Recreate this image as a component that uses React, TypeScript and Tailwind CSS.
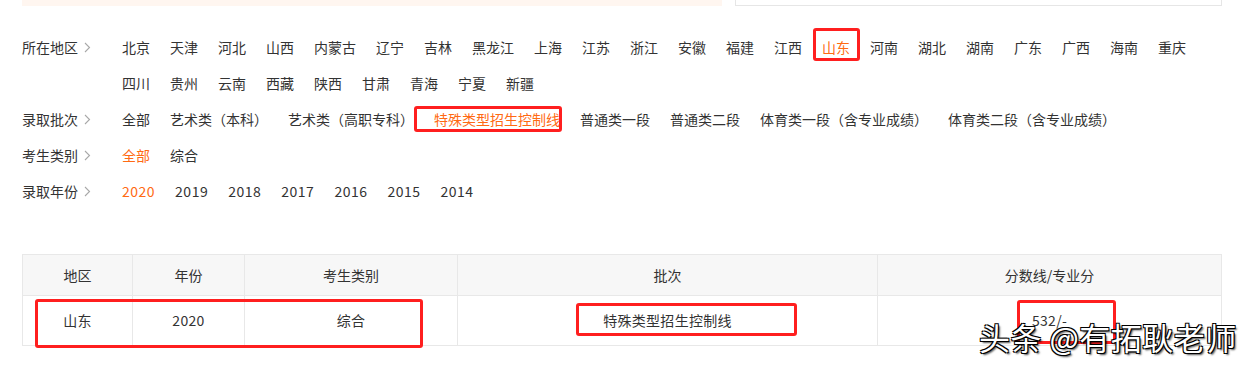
import React from "react";

const regionsRow = [
  "北京","天津","河北","山西","内蒙古","辽宁","吉林","黑龙江","上海","江苏","浙江","安徽","福建","江西","山东","河南","湖北","湖南","广东","广西","海南","重庆",
  "四川","贵州","云南","西藏","陕西","甘肃","青海","宁夏","新疆",
];
const batches = ["全部","艺术类（本科）","艺术类（高职专科）","特殊类型招生控制线","普通类一段","普通类二段","体育类一段（含专业成绩）","体育类二段（含专业成绩）"];
const kinds = ["全部","综合"];
const years = ["2020","2019","2018","2017","2016","2015","2014"];

function Chevron() {
  return (
    <svg width="7" height="11" viewBox="0 0 7 11" className="ml-[6px]">
      <path d="M1 1 L5.5 5.5 L1 10" fill="none" stroke="#a8a8a8" strokeWidth="1.1" />
    </svg>
  );
}

function Row({
  label,
  items,
  active,
  boxed,
  boxKind,
  wide,
}: {
  label: string;
  items: string[];
  active?: string;
  boxed?: string;
  boxKind?: "a" | "b";
  wide?: boolean;
}) {
  return (
    <div className="flex leading-[36px]">
      <div className="w-[100px] shrink-0 h-[36px] flex items-center">
        <span>{label}</span>
        <Chevron />
      </div>
      <div className="flex flex-wrap w-[1100px]">
        {items.map((it) => (
          <span
            key={it}
            className={
              "relative mr-[20px] whitespace-nowrap " +
              (wide ? "tracking-[0.5px] " : "") +
              (it === active || it === boxed ? "text-[#ff6a13]" : "")
            }
          >
            {it}
            {it === boxed && boxKind === "a" && (
              <span className="absolute left-[-9px] right-[-10px] top-[-1px] bottom-[4px] border-[3px] border-[#ff1f1f] rounded-[3px]" />
            )}
            {it === boxed && boxKind === "b" && (
              <span className="absolute left-[-20px] right-[-2px] top-[5px] bottom-[5px] border-[3px] border-[#ff1f1f] rounded-[3px]" />
            )}
          </span>
        ))}
      </div>
    </div>
  );
}

export default function App() {
  return (
    <div className="relative w-[1252px] h-[367px] bg-white overflow-hidden text-[14px] text-[#333] font-['Noto_Sans_CJK_SC',sans-serif]">
      <div className="flex px-[22px]">
        <div className="w-[700px] h-[6px] bg-[#fff6f0]" />
        <div className="ml-[13px] w-[487px] h-[6px] border-x border-b border-[#e6e6e6]" />
      </div>

      <div className="mt-[23px] px-[22px]">
        <Row label="所在地区" items={regionsRow} boxed="山东" boxKind="a" />
        <Row label="录取批次" items={batches} boxed="特殊类型招生控制线" boxKind="b" />
        <Row label="考生类别" items={kinds} active="全部" />
        <Row label="录取年份" items={years} active="2020" wide />
      </div>

      <div className="relative mt-[45px] ml-[22px] w-[1200px]">
        <table className="table-fixed border-collapse w-[1199px] text-center">
          <colgroup>
            <col className="w-[110px]" />
            <col className="w-[112px]" />
            <col className="w-[213px]" />
            <col className="w-[420px]" />
            <col className="w-[344px]" />
          </colgroup>
          <thead>
            <tr className="h-[41px] bg-[#f7f7f7]">
              {["地区", "年份", "考生类别", "批次", "分数线/专业分"].map((h) => (
                <th key={h} className="border border-[#e8e8e8] font-normal p-0">
                  {h}
                </th>
              ))}
            </tr>
          </thead>
          <tbody>
            <tr className="h-[50px]">
              {["山东", "2020", "综合", "特殊类型招生控制线", "532/-"].map((c) => (
                <td key={c} className="border border-[#e8e8e8] p-0 tracking-[0.3px]">
                  {c}
                </td>
              ))}
            </tr>
          </tbody>
        </table>
        <div className="absolute left-[13px] top-[45px] w-[388px] h-[49px] border-[3px] border-[#ff1f1f] rounded-[3px]" />
        <div className="absolute left-[554px] top-[49px] w-[221px] h-[33px] border-[3px] border-[#ff1f1f] rounded-[3px]" />
        <div className="absolute left-[995px] top-[46px] w-[99px] h-[44px] border-[3px] border-[#ff1f1f] rounded-[3px]" />
      </div>

      <div className="absolute left-[979px] top-[321px] text-[31px] leading-none text-white whitespace-nowrap tracking-[0.5px] [text-shadow:1px_1px_0_#000,-1px_-1px_0_#000,1px_-1px_0_#000,-1px_1px_0_#000,2px_2px_2px_rgba(0,0,0,0.7)]">
        头条 @有拓耿老师
      </div>
    </div>
  );
}
